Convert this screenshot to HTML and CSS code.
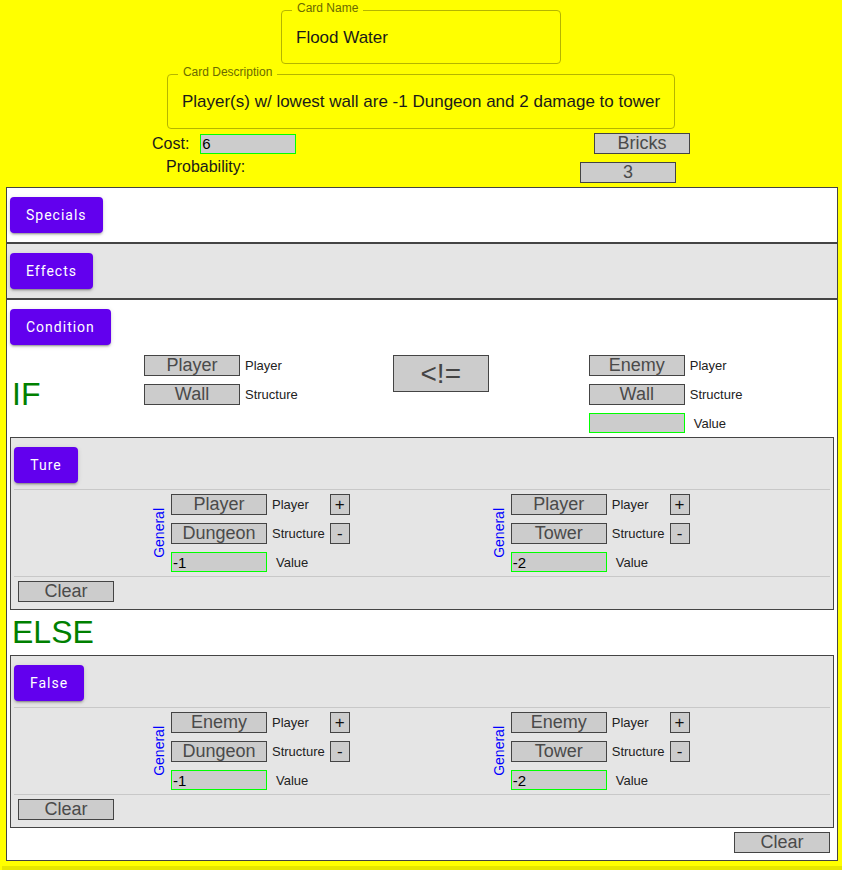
FILE: index.html
```html
<!DOCTYPE html>
<html>
<head>
<meta charset="utf-8">
<title>Card Editor</title>
<link rel="stylesheet" href="styles.css">
</head>
<body>
<div class="top">
  <fieldset class="field name-field">
    <legend>Card Name</legend>
    <div class="field-value">Flood Water</div>
  </fieldset>
  <fieldset class="field desc-field">
    <legend>Card Description</legend>
    <div class="field-value">Player(s) w/ lowest wall are -1 Dungeon and 2 damage to tower</div>
  </fieldset>
  <div class="cost-row">
    <div class="cost-left">
      <span class="top-label">Cost:</span>
      <input class="val cost-input" value="6">
    </div>
    <button class="sel">Bricks</button>
  </div>
  <div class="prob-row">
    <span class="top-label prob-label">Probability:</span>
    <button class="sel prob-btn">3</button>
  </div>
</div>

<div class="editor">
  <section class="sec sec-white">
    <button class="mui">Specials</button>
  </section>
  <section class="sec sec-gray">
    <button class="mui">Effects</button>
  </section>
  <section class="sec cond">
    <button class="mui">Condition</button>
    <div class="if-row">
      <div class="big if-text">IF</div>
      <div class="grid cond-left">
        <button class="sel">Player</button><span class="lbl">Player</span>
        <button class="sel">Wall</button><span class="lbl">Structure</span>
      </div>
      <button class="op">&lt;!=</button>
      <div class="grid cond-right">
        <button class="sel">Enemy</button><span class="lbl">Player</span>
        <button class="sel">Wall</button><span class="lbl">Structure</span>
        <input class="val" value=""><span class="lbl lbl-v">Value</span>
      </div>
    </div>

    <div class="branch">
      <button class="mui">Ture</button>
      <div class="divider first"></div>
      <div class="eff-row">
        <div class="eff">
          <div class="general">General</div>
          <div class="grid eff-grid">
            <button class="sel">Player</button><span class="lbl">Player</span><button class="pm">+</button>
            <button class="sel">Dungeon</button><span class="lbl">Structure</span><button class="pm">-</button>
            <input class="val" value="-1"><span class="lbl lbl-v">Value</span><span></span>
          </div>
        </div>
        <div class="eff">
          <div class="general">General</div>
          <div class="grid eff-grid">
            <button class="sel">Player</button><span class="lbl">Player</span><button class="pm">+</button>
            <button class="sel">Tower</button><span class="lbl">Structure</span><button class="pm">-</button>
            <input class="val" value="-2"><span class="lbl lbl-v">Value</span><span></span>
          </div>
        </div>
      </div>
      <div class="divider"></div>
      <button class="sel clear">Clear</button>
    </div>

    <div class="big else-text">ELSE</div>

    <div class="branch">
      <button class="mui">False</button>
      <div class="divider first"></div>
      <div class="eff-row">
        <div class="eff">
          <div class="general">General</div>
          <div class="grid eff-grid">
            <button class="sel">Enemy</button><span class="lbl">Player</span><button class="pm">+</button>
            <button class="sel">Dungeon</button><span class="lbl">Structure</span><button class="pm">-</button>
            <input class="val" value="-1"><span class="lbl lbl-v">Value</span><span></span>
          </div>
        </div>
        <div class="eff">
          <div class="general">General</div>
          <div class="grid eff-grid">
            <button class="sel">Enemy</button><span class="lbl">Player</span><button class="pm">+</button>
            <button class="sel">Tower</button><span class="lbl">Structure</span><button class="pm">-</button>
            <input class="val" value="-2"><span class="lbl lbl-v">Value</span><span></span>
          </div>
        </div>
      </div>
      <div class="divider"></div>
      <button class="sel clear">Clear</button>
    </div>

    <div class="foot">
      <button class="sel">Clear</button>
    </div>
  </section>
</div>
<div class="strip"></div>
</body>
</html>
```
FILE: styles.css
```css
html {
  overflow: hidden;
}
body {
  margin: 0;
  background: #ffff00;
  font-family: "Liberation Sans", Arial, sans-serif;
  color: #1a1a1a;
}

/* ---------- controls ---------- */
.sel {
  box-sizing: border-box;
  width: 96px;
  height: 21px;
  border: 1px solid #444;
  background: #cccccc;
  color: #4a4a4a;
  font-family: "Liberation Sans", Arial, sans-serif;
  font-size: 18px;
  line-height: 19px;
  padding: 0;
  margin: 0;
  text-align: center;
  display: block;
}
.val {
  box-sizing: border-box;
  width: 96px;
  height: 20px;
  border: 1px solid #00ff00;
  background: #cccccc;
  color: #000;
  font-family: "Liberation Sans", Arial, sans-serif;
  font-size: 15px;
  padding: 0 1px;
  margin: 0;
  outline: none;
  display: block;
}
.op {
  box-sizing: border-box;
  width: 96px;
  height: 37px;
  border: 1px solid #444;
  background: #cccccc;
  color: #444;
  font-family: "Liberation Sans", Arial, sans-serif;
  font-size: 28px;
  line-height: 35px;
  padding: 0;
  margin: 0 0 0 95px;
}
.pm {
  box-sizing: border-box;
  width: 20px;
  height: 21px;
  border: 1px solid #444;
  background: #cccccc;
  color: #111;
  font-family: "Liberation Sans", Arial, sans-serif;
  font-size: 17px;
  line-height: 19px;
  padding: 0;
  margin: 0;
  text-align: center;
}
.mui {
  display: block;
  background: #6200ee;
  color: #fff;
  border: 0;
  border-radius: 4px;
  padding: 6px 16px;
  min-width: 64px;
  font-family: Roboto, "Liberation Sans", sans-serif;
  font-weight: 400;
  font-size: 14px;
  line-height: 24px;
  letter-spacing: 1px;
  box-shadow: 0 3px 1px -2px rgba(0, 0, 0, 0.2), 0 2px 2px 0 rgba(0, 0, 0, 0.14), 0 1px 5px 0 rgba(0, 0, 0, 0.12);
}
.lbl {
  font-size: 13px;
  color: #222;
  white-space: nowrap;
}
.lbl-v {
  padding-left: 4px;
}

/* ---------- top fields ---------- */
.field {
  box-sizing: border-box;
  border: 1px solid #b5b500;
  border-radius: 4px;
  padding: 0 14px;
  margin: 3px auto 0;
  min-width: 0;
}
.field legend {
  font-size: 12px;
  line-height: 11px;
  color: #6b6b00;
  padding: 0 5px 3px;
  margin-left: -4px;
}
.field-value {
  font-size: 17px;
  line-height: 19px;
  padding: 11px 0 16px;
  color: #1a1a1a;
  white-space: nowrap;
}
.name-field {
  width: 280px;
}
.desc-field {
  width: fit-content;
}
.desc-field .field-value {
  padding-bottom: 17px;
}

.cost-row {
  width: 538px;
  margin: 4px auto 0;
  display: flex;
  align-items: center;
  justify-content: space-between;
  height: 21px;
}
.cost-left {
  display: flex;
  align-items: center;
}
.top-label {
  font-size: 16px;
  line-height: 18px;
  color: #1a1a1a;
}
.cost-left .cost-input {
  margin-left: 11px;
}
.prob-row {
  width: 510px;
  margin: 4px auto 0;
  display: flex;
  align-items: flex-start;
  justify-content: space-between;
}
.prob-row .prob-btn {
  margin-top: 4px;
}

/* ---------- editor ---------- */
.editor {
  box-sizing: border-box;
  width: 832px;
  margin: 4px 0 0 6px;
  border: 1px solid #444;
  background: #fff;
}
.sec {
  padding: 9px 3px;
}
.sec-white {
  background: #fff;
  border-bottom: 2px solid #444;
}
.sec-gray {
  background: #e5e5e5;
  border-bottom: 2px solid #444;
}
.cond {
  background: #fff;
  padding: 9px 3px 7px;
}

.if-row {
  display: flex;
  align-items: flex-start;
  margin-top: 10px;
}
.big {
  font-size: 32px;
  line-height: 36px;
  color: #008000;
}
.if-text {
  width: 132px;
  margin-left: 2px;
  align-self: center;
}
.grid {
  display: grid;
  grid-template-columns: 96px auto;
  column-gap: 5px;
  row-gap: 8px;
  align-items: center;
}
.cond-right {
  margin-left: 100px;
}
.eff-grid {
  grid-template-columns: 96px auto 20px;
}

.branch {
  margin-top: 4px;
  border: 1px solid #444;
  background: #e5e5e5;
  padding: 9px 3px 7px;
}
.divider {
  height: 1px;
  background: #c8c8c8;
  margin-top: 4px;
}
.divider.first {
  margin-top: 6px;
}
.eff-row {
  display: flex;
  gap: 141px;
  padding-left: 137px;
  margin-top: 4px;
}
.eff {
  display: flex;
  align-items: center;
}
.general {
  writing-mode: vertical-rl;
  transform: rotate(180deg);
  color: #0000ff;
  font-size: 14px;
  margin-right: 4px;
}
.branch .clear {
  margin: 4px 0 0 4px;
}
.else-text {
  margin: 4px 0 5px 2px;
}
.foot {
  display: flex;
  justify-content: flex-end;
  margin-top: 4px;
  padding-right: 4px;
}
.strip {
  height: 4px;
  margin: 5px 0 0 2px;
  background: #e6e600;
}
```
